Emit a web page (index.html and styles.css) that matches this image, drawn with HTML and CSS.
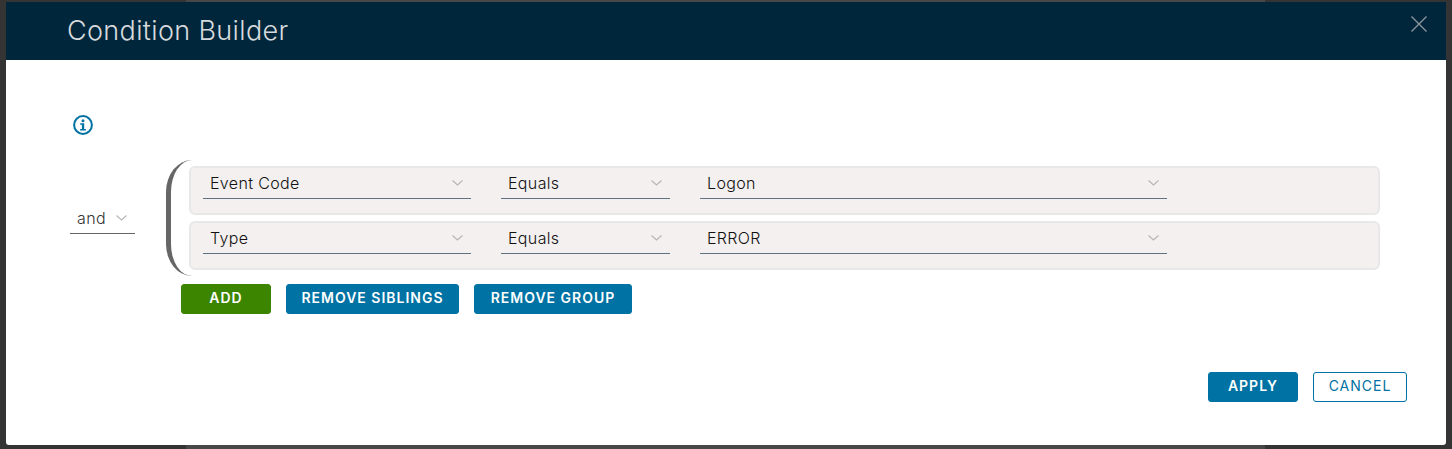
FILE: index.html
```html
<!DOCTYPE html>
<html lang="en">
    <head>
        <meta charset="UTF-8">
        <title>Condition Builder</title>
        <link rel="stylesheet" href="styles.css">
    </head>
    <body>
        <div class="modal">
            <div class="modal-header">
                <h3 class="modal-title">Condition Builder</h3>
                <button class="close-btn" aria-label="Close">
                    <svg width="16" height="16" viewBox="0 0 16 16"><path d="M0.5 0.5L15.5 15.5M15.5 0.5L0.5 15.5" stroke="#8c969e" stroke-width="1.4" fill="none"/></svg>
                </button>
            </div>
            <div class="modal-body">
                <svg class="info-icon" width="20" height="20" viewBox="0 0 20 20">
                    <circle cx="10" cy="10" r="8.9" stroke="#0072a3" stroke-width="2" fill="none"/>
                    <circle cx="10" cy="5.7" r="1.5" fill="#0072a3"/>
                    <path d="M7.2 8.2H11.2V14H12.9V15.6H7.1V14H8.9V9.8H7.2Z" fill="#0072a3"/>
                </svg>
                <div class="group">
                    <div class="select select-op">
                        <span>and</span>
                        <svg class="chev" width="11" height="6" viewBox="0 0 11 6"><path d="M0.5 0.5L5.5 5L10.5 0.5" stroke="#b5b5b5" stroke-width="1.1" fill="none"/></svg>
                    </div>
                    <div class="group-main">
                        <div class="bracket">
                            <div class="rule">
                                <div class="select select-field">
                                    <span>Event Code</span>
                                    <svg class="chev" width="11" height="6" viewBox="0 0 11 6"><path d="M0.5 0.5L5.5 5L10.5 0.5" stroke="#b5b5b5" stroke-width="1.1" fill="none"/></svg>
                                </div>
                                <div class="select select-cmp">
                                    <span>Equals</span>
                                    <svg class="chev" width="11" height="6" viewBox="0 0 11 6"><path d="M0.5 0.5L5.5 5L10.5 0.5" stroke="#b5b5b5" stroke-width="1.1" fill="none"/></svg>
                                </div>
                                <div class="select select-value">
                                    <span>Logon</span>
                                    <svg class="chev" width="11" height="6" viewBox="0 0 11 6"><path d="M0.5 0.5L5.5 5L10.5 0.5" stroke="#b5b5b5" stroke-width="1.1" fill="none"/></svg>
                                </div>
                            </div>
                            <div class="rule">
                                <div class="select select-field">
                                    <span>Type</span>
                                    <svg class="chev" width="11" height="6" viewBox="0 0 11 6"><path d="M0.5 0.5L5.5 5L10.5 0.5" stroke="#b5b5b5" stroke-width="1.1" fill="none"/></svg>
                                </div>
                                <div class="select select-cmp">
                                    <span>Equals</span>
                                    <svg class="chev" width="11" height="6" viewBox="0 0 11 6"><path d="M0.5 0.5L5.5 5L10.5 0.5" stroke="#b5b5b5" stroke-width="1.1" fill="none"/></svg>
                                </div>
                                <div class="select select-value">
                                    <span>ERROR</span>
                                    <svg class="chev" width="11" height="6" viewBox="0 0 11 6"><path d="M0.5 0.5L5.5 5L10.5 0.5" stroke="#b5b5b5" stroke-width="1.1" fill="none"/></svg>
                                </div>
                            </div>
                        </div>
                        <div class="group-actions">
                            <button class="btn btn-add">ADD</button>
                            <button class="btn btn-primary btn-siblings">REMOVE SIBLINGS</button>
                            <button class="btn btn-primary btn-group">REMOVE GROUP</button>
                        </div>
                    </div>
                </div>
            </div>
            <div class="modal-footer">
                <button class="btn btn-primary btn-apply">APPLY</button>
                <button class="btn btn-outline">CANCEL</button>
            </div>
        </div>
    </body>
</html>
```

FILE: styles.css
```css
* {
    box-sizing: border-box;
}
body {
    margin: 0;
    padding: 2px 6px 4px;
    height: 449px;
    overflow: hidden;
    background: linear-gradient(90deg, #343434 186px, #474747 186px, #474747 1265px, #343434 1265px);
    font-family: Inter, "Liberation Sans", sans-serif;
    display: flex;
}
.modal {
    flex: 1;
    display: flex;
    flex-direction: column;
    background: #fff;
    border-radius: 0 0 3px 3px;
}
.modal-header {
    height: 58px;
    background: #00263b;
    display: flex;
    justify-content: space-between;
    padding: 13px 19px 0 61px;
}
.modal-title {
    margin: 0;
    font-size: 27px;
    line-height: 32px;
    font-weight: 300;
    letter-spacing: 0.35px;
    color: #d6dadd;
}
.close-btn {
    width: 16px;
    height: 16px;
    padding: 0;
    margin-top: 1px;
    border: none;
    background: none;
    line-height: 0;
}
.modal-body {
    flex: 1;
    padding: 55px 66px 0 64px;
}
.info-icon {
    display: block;
    margin-left: 3px;
}
.group {
    margin-top: 25px;
    display: flex;
    align-items: flex-start;
}
.group-main {
    margin-left: 31px;
    flex: 1;
}
.bracket {
    height: 116px;
    padding: 6px 0 6px 18px;
    border-left: 5px solid #666;
    border-radius: 26px / 32px;
    display: flex;
    flex-direction: column;
    gap: 6px;
}
.rule {
    height: 49px;
    background: #f3f0ef;
    border: 2px solid #e8e8e8;
    border-radius: 6px;
    padding: 0 0 0 12px;
    display: flex;
    gap: 30px;
}
.select {
    height: 31px;
    border-bottom: 1px solid #5f7381;
    display: flex;
    justify-content: space-between;
    align-items: center;
    padding: 0 8px 0 7px;
    font-size: 16px;
    font-weight: 300;
    letter-spacing: 0.35px;
    color: #111;
}
.select-op {
    width: 65px;
    height: 32px;
    margin-top: 42px;
    padding: 0 8px 0 7px;
    color: #333;
    border-bottom-color: #666;
}
.select-field {
    width: 268px;
}
.select-cmp {
    width: 169px;
}
.select-value {
    width: 467px;
}
.group-actions {
    margin-top: 8px;
    padding-left: 15px;
    display: flex;
    gap: 15px;
}
.btn {
    height: 30px;
    padding: 0 0 4px;
    border: 1px solid #0072a3;
    border-radius: 3px;
    font-family: inherit;
    font-size: 14px;
    font-weight: 600;
    letter-spacing: 1px;
    color: #fff;
    background: #0072a3;
}
.btn-add {
    width: 90px;
    background: #3c8500;
    border-color: #3c8500;
}
.btn-siblings {
    width: 173px;
}
.btn-group {
    width: 158px;
}
.modal-footer {
    padding: 0 39px 43px 0;
    display: flex;
    justify-content: flex-end;
    gap: 15px;
}
.btn-apply {
    width: 90px;
}
.btn-outline {
    width: 94px;
    background: #fff;
    color: #0072a3;
    font-weight: 400;
}
```
